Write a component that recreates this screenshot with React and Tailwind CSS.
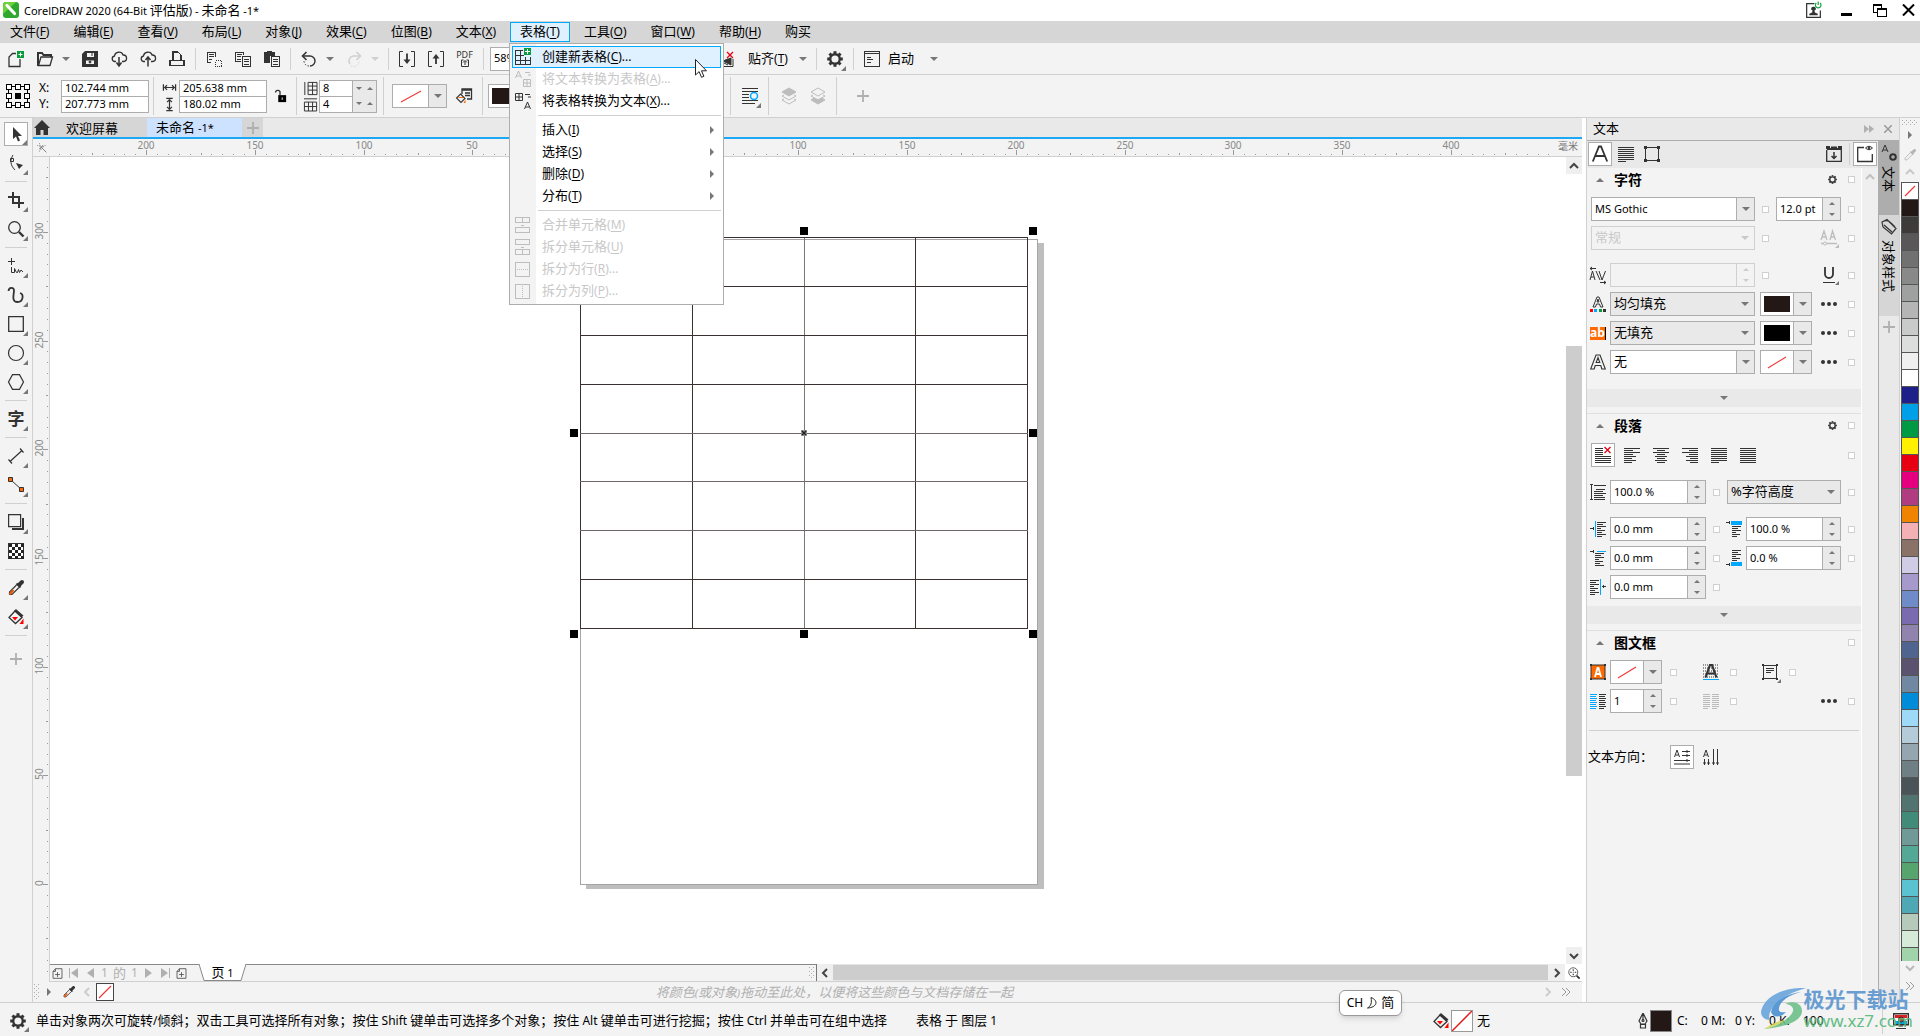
import { Fragment } from 'react';

const SWATCHES = [
  '#231815', '#3e3a39', '#595757', '#727171', '#898989', '#9fa0a0', '#b5b5b6', '#c9caca', '#dcdddd',
  '#efefef', '#ffffff', '#1d2088', '#00a0e9', '#009944', '#fff100', '#e60012', '#e4007f', '#b03c82',
  '#f08300', '#f4b1b3', '#8a7366', '#d0cce6', '#a699cb', '#6f8cc8', '#7a6aaf', '#9084ae', '#4f6590',
  '#5b5270', '#7188a3', '#008cd9', '#9ed9f8', '#b4cbd9', '#94a7b0', '#6f7f86', '#4a5358', '#517470',
  '#418b79', '#6f9a97', '#54a896', '#57a56d', '#5bc2d0', '#4ea9b4', '#b6cabb', '#d5ead7', '#a2d4a9',
];

const PX_PER_5MM = 10.87;

// Latin runs are set smaller than the Chinese around them
function Mixed({ children, latin = 'text-[11px]' }) {
  return children.split(/([\x20-\x7e]+)/).map((part, i) =>
    i % 2 ? (
      <span key={i} className={`${latin} whitespace-pre`}>{part}</span>
    ) : (
      <Fragment key={i}>{part}</Fragment>
    )
  );
}

function Label({ text, hotkey, dots }) {
  return (
    <>
      {text}
      {hotkey && (
        <span className="text-xs">
          (<span className="underline underline-offset-2">{hotkey}</span>){dots && '...'}
        </span>
      )}
    </>
  );
}

/* ---------- icons ---------- */

function Icon({ size = 16, color = '#333', crisp, children }) {
  return (
    <svg
      width={size}
      height={size}
      viewBox="0 0 16 16"
      fill="none"
      stroke={color}
      strokeWidth="1"
      shapeRendering={crisp ? 'crispEdges' : 'auto'}
      className="shrink-0 overflow-visible"
      aria-hidden="true"
    >
      {children}
    </svg>
  );
}

function Caret({ up, color = '#777' }) {
  return (
    <svg width="8" height="4" viewBox="0 0 8 4" className="shrink-0" aria-hidden="true">
      <path d={up ? 'M0 4h8L4 0z' : 'M0 0h8L4 4z'} fill={color} />
    </svg>
  );
}

function SmallCaret({ up, color = '#777' }) {
  return (
    <svg width="6" height="3" viewBox="0 0 6 3" className="shrink-0" aria-hidden="true">
      <path d={up ? 'M0 3h6L3 0z' : 'M0 0h6L3 3z'} fill={color} />
    </svg>
  );
}

function Chevron({ dir = 'up', color = '#444', double }) {
  const d = {
    up: 'M1 7l4-4 4 4',
    down: 'M1 3l4 4 4-4',
    left: 'M7 1L3 5l4 4',
    right: 'M3 1l4 4-4 4',
  }[dir];
  return (
    <svg width="10" height="10" viewBox="0 0 10 10" fill="none" stroke={color} strokeWidth={double ? 1 : 2} className="shrink-0" aria-hidden="true">
      {double ? <path d="M1 1l4 4-4 4M5 1l4 4-4 4" /> : <path d={d} />}
    </svg>
  );
}

function Lines({ rows, color = '#333' }) {
  return rows.map(([x1, x2], i) => <path key={i} d={`M${x1} ${i * 2 + 1.5}H${x2}`} stroke={color} />);
}

function Gear({ size = 16 }) {
  const teeth = [0, 45, 90, 135, 180, 225, 270, 315];
  return (
    <Icon size={size}>
      <circle cx="8" cy="8" r="4.8" strokeWidth="2.4" />
      {teeth.map((a) => (
        <path key={a} d="M8 2.8V0.2" strokeWidth="3" transform={`rotate(${a} 8 8)`} />
      ))}
    </Icon>
  );
}

function Plus({ color = '#b0b0b0' }) {
  return (
    <Icon size={12} color={color}>
      <path d="M8 0v16M0 8h16" strokeWidth="2.4" />
    </Icon>
  );
}

function Dropper({ gray }) {
  const ink = gray ? '#b4b4b4' : '#333';
  return (
    <Icon color={ink}>
      <path d="M11 5l3-3" strokeWidth="4" strokeLinecap="round" />
      <path d="M8.500 3.500l4 4" strokeWidth="2" />
      <path d="M8.500 5L1.500 12v2.500H4L11 7.500" strokeWidth="1.100" fill="#f3f3f3" />
      {!gray && <path d="M5.500 10L1.500 14.500" stroke="#e8590c" strokeWidth="2.200" />}
    </Icon>
  );
}

function Bucket() {
  return (
    <Icon>
      <path d="M7 2l7 6.500-6.500 6L1 8.500z" strokeWidth="1.300" />
      <path d="M7 1l7.500 6.500" strokeWidth="2.800" />
      <path d="M4 8h6l-3 3.500z" fill="#f00" stroke="none" />
      <path d="M15.500 9.500v5.500h-4z" fill="#f00" stroke="none" />
    </Icon>
  );
}

function RedSlash({ w = 24, h = 14 }) {
  return (
    <svg width={w} height={h} viewBox={`0 0 ${w} ${h}`} className="shrink-0" aria-hidden="true">
      <path d={`M1 ${h - 1}L${w - 1} 1`} stroke="#f03a3a" strokeWidth="1.2" />
    </svg>
  );
}

const cloud = 'M5 10.500H3.500a2.800 2.800 0 0 1 0-5.500a4.500 4.500 0 0 1 8.600-1a3.200 3.200 0 0 1 .4 6.500H11';

const icons = {
  newDoc: (
    <Icon>
      <path d="M8 2.500H4.500L1 6v9.500h11V8" strokeWidth="1.300" />
      <path d="M9 0h7v7H9z" fill="#0a9c3c" stroke="none" />
      <path d="M12.500 1.500v4M10.500 3.500h4" stroke="#fff" />
    </Icon>
  ),
  open: (
    <Icon>
      <path d="M1 15V2h4l1.500 2H14v2" strokeWidth="2" />
      <path d="M1.500 14.500L4 6h11.500L13 14.500z" strokeWidth="1.300" fill="#f3f3f3" />
    </Icon>
  ),
  save: (
    <Icon>
      <path d="M3 0h13v16H0V3z" fill="#333" stroke="none" />
      <path d="M5 2h7v4H5zM4 9.500h8V13H4z" fill="#f3f3f3" stroke="none" />
      <path d="M10 2v3" />
      <circle cx="8" cy="11" r="1" fill="#333" />
    </Icon>
  ),
  cloudDown: (
    <Icon>
      <path d={cloud} strokeWidth="1.300" />
      <path d="M8 6v8M5.500 11.500L8 15l2.500-3.500" strokeWidth="1.500" />
    </Icon>
  ),
  cloudUp: (
    <Icon>
      <path d={cloud} strokeWidth="1.300" />
      <path d="M8 15.500V7M5.500 9L8 6l2.500 3" strokeWidth="1.500" />
    </Icon>
  ),
  print: (
    <Icon crisp>
      <path d="M1 9.500h14v5H1zM4 9.500V1h5l3 3v5.500" strokeWidth="1.300" />
    </Icon>
  ),
  cut: (
    <Icon crisp>
      <path d="M5 11.500H1.500V1h8v5M3 3.500h5M3 5.500h5M3 8h3" />
      <path d="M9.500 9.500h6v6h-6z" strokeDasharray="1 1" />
    </Icon>
  ),
  copy: (
    <Icon crisp>
      <path d="M6 10.500H.5V1h8v3M2 3.500h5M2 5.500h4M2 8h4M7.500 5.500h8v10h-8zM9 8h5M9 10.500h5M9 13h5" />
    </Icon>
  ),
  paste: (
    <Icon crisp>
      <path d="M0 1h3V0h5v1h3v4H6v7H0z" fill="#333" stroke="none" />
      <path d="M7.500 5.500h8v10h-8zM9 8h5M9 10.500h5M9 13h5" />
    </Icon>
  ),
  undo: (
    <Icon>
      <path d="M2 5h7a5 5 0 0 1 0 10" strokeWidth="1.400" />
      <path d="M5.500 1L1.500 5l4 4" strokeWidth="1.600" />
      <path d="M8 15a5 5 0 0 1-5-5" strokeDasharray="1.500 1.500" />
    </Icon>
  ),
  redo: (
    <Icon color="#d0d0d0">
      <path d="M14 5H8a5 5 0 0 0-4 8" strokeWidth="1.400" />
      <path d="M10.500 1l4 4-4 4" strokeWidth="1.600" />
      <path d="M5 14.500a5 5 0 0 0 8-4" strokeDasharray="1.500 1.500" />
    </Icon>
  ),
  importDoc: (
    <Icon>
      <path d="M4 .5H.5v15H4M12 .5h3.500v15H12" />
      <path d="M8 2.500v7" strokeWidth="1.800" />
      <path d="M4.500 8.500h7L8 13z" fill="#333" stroke="none" />
    </Icon>
  ),
  exportDoc: (
    <Icon>
      <path d="M4 .5H.5v15H4M12 .5h3.500v15H12" />
      <path d="M8 13V6" strokeWidth="1.800" />
      <path d="M4.500 7.500h7L8 3z" fill="#333" stroke="none" />
    </Icon>
  ),
  snapOff: (
    <Icon>
      <path d="M1 8v7.500h14V8M10 8l-6 3 6 3" />
      <path d="M5 10l8-3v7z" fill="#333" />
      <path d="M9 1l6 6M15 1L9 7" stroke="#e60012" strokeWidth="1.300" />
    </Icon>
  ),
  launch: (
    <Icon crisp>
      <path d="M.5.5h15v15H.5zM0 2.500h16" />
      <path d="M3 6h4M3 8.500h6M3 11h4" />
    </Icon>
  ),
  pick: (
    <Icon>
      <path d="M5 1v12l3-2.500 2 5 2-1-2-4.500h4z" fill="#333" stroke="none" />
    </Icon>
  ),
  shape: (
    <Icon>
      <path d="M5 0C2 5 2 10 7 15M2.500 3.500h3v3h-3z" fill="#f3f3f3" />
      <path d="M8 8l7 2-4 4z" fill="#333" stroke="none" />
    </Icon>
  ),
  crop: (
    <Icon crisp>
      <path d="M5 0v11h11M0 5h11v11" strokeWidth="2" />
    </Icon>
  ),
  zoom: (
    <Icon>
      <circle cx="6.500" cy="6.500" r="5.800" strokeWidth="1.300" />
      <path d="M11 11l4.500 4.500" strokeWidth="2.400" />
    </Icon>
  ),
  freehand: (
    <Icon>
      <path d="M3.500 0v7M0 3.500h7M3.500 9v5.500h3v-4l2 4h1l1-3 1 3 1.500-2.500 2 2" />
    </Icon>
  ),
  artistic: (
    <Icon>
      <path d="M.5 4C1 0 6 0 6 3.500S3 15 9.500 15c6 0 6.500-8 2.500-9" strokeWidth="1.800" />
    </Icon>
  ),
  rect: (
    <Icon>
      <path d="M.7.7h14.600v14.600H.7z" strokeWidth="1.300" />
    </Icon>
  ),
  ellipse: (
    <Icon>
      <circle cx="8" cy="8" r="7.500" strokeWidth="1.200" />
    </Icon>
  ),
  polygon: (
    <Icon>
      <path d="M4.500.7h7l4 7.300-4 7.300h-7L.5 8z" strokeWidth="1.200" />
    </Icon>
  ),
  dimension: (
    <Icon>
      <path d="M2 13.500L14 2.500M.5 11.500l3.500 4M12 .5l3.500 4" strokeWidth="1.200" />
    </Icon>
  ),
  connector: (
    <Icon>
      <path d="M3 3l11 10" />
      <path d="M.5.5h4v4h-4zM11.500 10.500h4v4h-4z" fill="#ff6a00" />
    </Icon>
  ),
  shadow: (
    <Icon>
      <path d="M4 15h11V4" strokeWidth="2" />
      <path d="M.6.6h12v12H.6z" fill="#f3f3f3" strokeWidth="1.200" />
    </Icon>
  ),
  checker: (
    <Icon crisp>
      <path d="M.5.5h15v15H.5z" fill="#fff" />
      {[0, 1, 2, 3, 4].map((r) =>
        [0, 1, 2, 3, 4].map((c) =>
          (r + c) % 2 ? null : (
            <rect key={`${r}${c}`} x={c * 3 + 1} y={r * 3 + 1} width="3" height="3" fill="#222" stroke="none" />
          )
        )
      )}
    </Icon>
  ),
};

/* ---------- small controls ---------- */

function ToolButton({ label, children, corner, className = 'w-[29px]' }) {
  return (
    <button type="button" aria-label={label} className={`relative flex h-6 shrink-0 items-center justify-center ${className}`}>
      {children}
      {corner && <Corner />}
    </button>
  );
}

function Corner() {
  return (
    <svg width="5" height="5" className="absolute right-[3px] bottom-0" aria-hidden="true">
      <path d="M5 0v5H0z" fill="#777" />
    </svg>
  );
}

function DropCaret({ color }) {
  return (
    <button type="button" aria-label="展开" className="flex h-6 w-4 shrink-0 items-center pl-[3px]">
      <Caret color={color} />
    </button>
  );
}

function Divider({ tall }) {
  return <span className={`mr-[3px] ml-1 w-px shrink-0 bg-[#d0d0d0] ${tall ? 'h-[38px]' : 'h-[22px]'}`} />;
}

function Spin({ label, value, className, disabled }) {
  return (
    <div className={`flex h-6 shrink-0 border ${disabled ? 'border-[#d0d0d0] bg-[#f3f3f3]' : 'border-[#adadad] bg-white'} ${className}`}>
      <input aria-label={label} defaultValue={value} disabled={disabled} className="min-w-0 flex-1 px-[3px] text-[11px] outline-none" />
      <span className={`flex w-[18px] flex-col items-center justify-between border-l py-1 ${disabled ? 'border-[#d0d0d0]' : 'border-[#adadad] bg-[#e9e9e9]'}`}>
        <SmallCaret up color={disabled ? '#ccc' : '#777'} />
        <SmallCaret color={disabled ? '#ccc' : '#777'} />
      </span>
    </div>
  );
}

function Select({ label, value, className, kind = 'edit', latin }) {
  const tone = {
    edit: 'border-[#adadad] bg-white text-black',
    list: 'border-[#adadad] bg-[#e9e9e9] text-black',
    off: 'border-[#d0d0d0] bg-[#f3f3f3] text-[#c8c8c8]',
  }[kind];
  return (
    <div className={`relative h-6 shrink-0 border ${tone} ${className}`}>
      <select
        aria-label={label}
        disabled={kind === 'off'}
        className={`block h-full w-full appearance-none pl-[3px] opacity-100 outline-none ${latin ? 'text-[11px]' : 'text-[13px]'}`}
      >
        <option>{value}</option>
      </select>
      <span
        className={`pointer-events-none absolute inset-y-0 right-0 flex w-[18px] items-center justify-center ${
          kind === 'edit' ? 'border-l border-[#adadad] bg-[#e9e9e9]' : ''
        }`}
      >
        <Caret color={kind === 'off' ? '#c8c8c8' : '#777'} />
      </span>
    </div>
  );
}

function ColorDrop({ label, color }) {
  return (
    <button type="button" aria-label={label} className="flex h-6 w-[52px] shrink-0 border border-[#adadad] bg-white">
      <span className="flex h-full flex-1 items-center justify-center">
        {color ? <span className="h-4 w-[26px]" style={{ backgroundColor: color }} /> : <RedSlash w={20} h={13} />}
      </span>
      <span className="flex h-full w-[18px] items-center justify-center border-l border-[#adadad] bg-[#e9e9e9]">
        <Caret />
      </span>
    </button>
  );
}

function Lock({ className = '' }) {
  return <input type="checkbox" aria-label="锁定" className={`size-[7px] shrink-0 appearance-none border border-[#d0d0d0] bg-white ${className}`} />;
}

function Dots() {
  return (
    <button type="button" aria-label="更多" className="flex w-4 shrink-0 justify-between">
      <span className="size-1 rounded-full bg-[#333]" />
      <span className="size-1 rounded-full bg-[#333]" />
      <span className="size-1 rounded-full bg-[#333]" />
    </button>
  );
}

function Grip({ className = 'w-[16px] h-[6px]' }) {
  return (
    <svg className={className} aria-hidden="true">
      <defs>
        <pattern id="grip" width="4" height="4" patternUnits="userSpaceOnUse">
          <path d="M0 0h1v1H0zM2 2h1v1H2z" fill="#aaa" />
        </pattern>
      </defs>
      <rect width="100%" height="100%" fill="url(#grip)" />
    </svg>
  );
}

/* ---------- top bars ---------- */

function TitleBar() {
  return (
    <header className="flex h-[21px] shrink-0 items-center bg-white pr-[5px] pb-px pl-[3px]">
      <svg width="16" height="16" viewBox="0 0 16 16" aria-hidden="true">
        <rect width="16" height="16" rx="3" fill="#2fa82f" />
        <path d="M0 3a3 3 0 0 1 3-3h10L0 12z" fill="#6cd23c" />
        <path d="M4 3.500l7.500 8" stroke="#fff" strokeWidth="3.200" strokeLinecap="round" />
      </svg>
      <h1 className="ml-[5px] text-[13px] leading-4">
        <Mixed>CorelDRAW 2020 (64-Bit 评估版) - 未命名 -1*</Mixed>
      </h1>
      <button type="button" aria-label="帐户" className="ml-auto">
        <Icon size={15}>
          <path d="M9 .7H.7v14.600h14.600V8" strokeWidth="1.300" />
          <path d="M8 4a2 2 0 0 1 1 4l.5 2 3 1.500V13h-9v-1.500l3-1.500.5-2a2 2 0 0 1 1-4z" fill="#333" stroke="none" />
          <path d="M11 0a3 3 0 1 0 4 0M13-1.500V2" stroke="#1aa84a" strokeWidth="1.300" />
        </Icon>
      </button>
      <button type="button" aria-label="最小化" className="mt-2 ml-5 h-[3px] w-[11px] bg-black" />
      <button type="button" aria-label="还原" className="ml-[21px]">
        <svg width="14" height="13" viewBox="0 0 14 13" fill="none" stroke="#000" strokeWidth="1" shapeRendering="crispEdges" aria-hidden="true">
          <path d="M4 8.500H.5v-8h8V4M0 1.500h9M4.500 4.500h9v8h-9zM4 5.500h10" />
        </svg>
      </button>
      <button type="button" aria-label="关闭" className="ml-[15px]">
        <svg width="13" height="12" viewBox="0 0 13 12" stroke="#000" strokeWidth="2" aria-hidden="true">
          <path d="M1 .5l11 11M12 .5l-11 11" />
        </svg>
      </button>
    </header>
  );
}

const MENUS = [
  ['文件', 'F'], ['编辑', 'E'], ['查看', 'V'], ['布局', 'L'], ['对象', 'J'], ['效果', 'C'], ['位图', 'B'], ['文本', 'X'],
  ['表格', 'T'], ['工具', 'O'], ['窗口', 'W'], ['帮助', 'H'], ['购买'],
];

function MenuBar() {
  return (
    <nav className="flex h-[22px] shrink-0 items-center gap-1 bg-[#d6d6d6] text-[13px]">
      {MENUS.map(([text, hotkey]) => {
        const active = text === '表格';
        return (
          <div key={text} className="relative">
            <button
              type="button"
              className={`block h-5 border px-[9px] pb-[2px] leading-4 whitespace-nowrap ${
                active ? 'border-[#00a8ff] bg-[#dff0ff]' : 'border-transparent'
              }`}
            >
              <Label text={text} hotkey={hotkey} />
            </button>
            {active && <TableMenu />}
          </div>
        );
      })}
    </nav>
  );
}

const gray = '#bdbdbd';

const TABLE_MENU = [
  {
    text: '创建新表格', hotkey: 'C', dots: true, active: true,
    icon: (
      <Icon crisp>
        <path d="M8 1.500H.5v14h15V8M0 6.500h9M0 11.500h15M5.500 1v14M10.500 8v7" />
        <path d="M9-1h7v7H9z" fill="#0a9c3c" stroke="none" />
        <path d="M12.500 0v5M10 2.500h5" stroke="#fff" />
      </Icon>
    ),
  },
  {
    text: '将文本转换为表格', hotkey: 'A', dots: true, off: true,
    icon: (
      <Icon color={gray}>
        <path d="M.5 7l3-7h0l3 7M1.500 5h4M10 1.500h5M13 4h3M8.500 8.500h7v7h-7zM8 12h8M12 8v8" />
      </Icon>
    ),
  },
  {
    text: '将表格转换为文本', hotkey: 'X', dots: true,
    icon: (
      <Icon>
        <path d="M.5.500h7v7h-7zM0 4h8M4 0v8M10 1.500h5M13 4h3M9.500 16l3-7h0l3 7M10.500 14h4" />
      </Icon>
    ),
  },
  null,
  { text: '插入', hotkey: 'I', sub: true },
  { text: '选择', hotkey: 'S', sub: true },
  { text: '删除', hotkey: 'D', sub: true },
  { text: '分布', hotkey: 'T', sub: true },
  null,
  {
    text: '合并单元格', hotkey: 'M', off: true,
    icon: <Icon color={gray} crisp><path d="M.5.500h14v5H.5zM7.500 0v5M.5 10.500h14v5H.5zM6 8h3" /></Icon>,
  },
  {
    text: '拆分单元格', hotkey: 'U', off: true,
    icon: <Icon color={gray} crisp><path d="M.5.500h14v5H.5zM7.500 10v5M.5 10.500h14v5H.5zM6 8h3" /></Icon>,
  },
  {
    text: '拆分为行', hotkey: 'R', dots: true, off: true,
    icon: <Icon color={gray} crisp><path d="M.5 1.500h14v14H.5z" /><path d="M2 8.500h12" strokeDasharray="1 1" /></Icon>,
  },
  {
    text: '拆分为列', hotkey: 'P', dots: true, off: true,
    icon: <Icon color={gray} crisp><path d="M.5 1.500h14v14H.5z" /><path d="M7.500 3v11" strokeDasharray="1 1" /></Icon>,
  },
];

function TableMenu() {
  return (
    <ul className="absolute top-[21px] left-[-1px] z-20 w-[215px] border border-[#adadad] bg-[linear-gradient(to_right,#f3f3f3_26px,#fff_26px)] py-[2px]">
      {TABLE_MENU.map((item, i) =>
        item === null ? (
          <li key={i} className="flex h-[7px] items-center pr-[2px] pl-7">
            <span className="h-px w-full bg-[#d0d0d0]" />
          </li>
        ) : (
          <li key={i} className="px-[2px]">
            <button
              type="button"
              disabled={item.off}
              className={`flex h-[22px] w-full items-center border pr-1.5 pl-[2px] whitespace-nowrap ${
                item.active ? 'border-[#00a8ff] bg-[#dff0ff]' : 'border-transparent'
              } ${item.off ? 'text-[#c8c8c8]' : 'text-black'}`}
            >
              <span className="mr-[11px] w-4">{item.icon}</span>
              <span>
                <Label {...item} />
              </span>
              {item.sub && (
                <svg width="4" height="8" className="ml-auto" aria-hidden="true">
                  <path d="M0 0v8l4-4z" fill="#777" />
                </svg>
              )}
            </button>
          </li>
        )
      )}
    </ul>
  );
}

function StandardBar() {
  return (
    <div className="flex h-8 shrink-0 items-center border-b border-[#d0d0d0] pl-px text-[13px]">
      <ToolButton label="新建">{icons.newDoc}</ToolButton>
      <ToolButton label="打开">{icons.open}</ToolButton>
      <DropCaret />
      <ToolButton label="保存">{icons.save}</ToolButton>
      <ToolButton label="从云下载">{icons.cloudDown}</ToolButton>
      <ToolButton label="上传到云">{icons.cloudUp}</ToolButton>
      <ToolButton label="打印">{icons.print}</ToolButton>
      <Divider />
      <ToolButton label="剪切">{icons.cut}</ToolButton>
      <ToolButton label="复制">{icons.copy}</ToolButton>
      <ToolButton label="粘贴">{icons.paste}</ToolButton>
      <Divider />
      <ToolButton label="撤消">{icons.undo}</ToolButton>
      <DropCaret />
      <ToolButton label="重做">{icons.redo}</ToolButton>
      <DropCaret color="#d0d0d0" />
      <Divider />
      <ToolButton label="导入">{icons.importDoc}</ToolButton>
      <ToolButton label="导出">{icons.exportDoc}</ToolButton>
      <ToolButton label="发布为 PDF" className="w-[29px] flex-col">
        <span className="text-[9px] leading-[8px] text-[#333]">PDF</span>
        <Icon size={8}>
          <path d="M5 2H1v13h14V2h-4M8 12V4M4 7l4-4 4 4" strokeWidth="2" />
        </Icon>
      </ToolButton>
      <Divider />
      <Select label="缩放级别" value="58%" latin className="ml-[3px] w-[76px]" />
      <ToolButton label="全屏预览">{icons.rect}</ToolButton>
      <ToolButton label="标尺">{icons.dimension}</ToolButton>
      <ToolButton label="网格">{icons.checker}</ToolButton>
      <ToolButton label="辅助线">{icons.crop}</ToolButton>
      <ToolButton label="放大">{icons.zoom}</ToolButton>
      <ToolButton label="关闭贴齐">{icons.snapOff}</ToolButton>
      <button type="button" className="w-14 shrink-0 pl-2 text-left whitespace-nowrap">
        <Label text="贴齐" hotkey="T" />
      </button>
      <DropCaret />
      <Divider />
      <ToolButton label="选项" corner><Gear /></ToolButton>
      <Divider />
      <ToolButton label="启动应用">{icons.launch}</ToolButton>
      <button type="button" className="w-[41px] shrink-0 pl-0.5 text-left">启动</button>
      <DropCaret />
    </div>
  );
}

function StackedInputs({ labels, values }) {
  return (
    <div className="w-[88px] shrink-0 border border-[#adadad] bg-white">
      {values.map((v, i) => (
        <input
          key={v}
          aria-label={labels[i]}
          defaultValue={v}
          className={`block w-full px-[3px] text-[11px] outline-none ${i ? 'h-4 border-t border-[#adadad]' : 'h-[15px]'}`}
        />
      ))}
    </div>
  );
}

function PropertyBar() {
  return (
    <div className="flex h-[43px] shrink-0 items-center border-b border-[#d0d0d0] pl-1.5">
      <svg width="24" height="24" viewBox="0 0 24 24" fill="#fff" stroke="#000" className="shrink-0" aria-hidden="true">
        <path d="M2.500 2.500h19v19h-19z" fill="none" />
        {[0, 9, 18].map((y) =>
          [0, 9, 18].map((x) => (
            <rect key={`${x}-${y}`} x={x + 0.5} y={y + 0.5} width="5" height="5" fill={x === 9 && y === 9 ? '#000' : '#fff'} />
          ))
        )}
      </svg>
      <div className="ml-[9px] w-[22px] shrink-0 text-xs leading-4">
        <p>X:</p>
        <p>Y:</p>
      </div>
      <StackedInputs labels={['X 坐标', 'Y 坐标']} values={['102.744 mm', '207.773 mm']} />
      <Divider tall />
      <div className="ml-1.5 flex w-4 shrink-0 flex-col gap-1">
        <Icon size={13}><path d="M.5 4v8M15.500 4v8M2 8h12M5 5L2 8l3 3M11 5l3 3-3 3" strokeWidth="1.500" /></Icon>
        <Icon size={13}><path d="M4 .5h8M4 15.500h8M8 2v12M5 5l3-3 3 3M5 11l3 3 3-3" strokeWidth="1.500" /></Icon>
      </div>
      <StackedInputs labels={['宽度', '高度']} values={['205.638 mm', '180.02 mm']} />
      <ToolButton label="锁定比率" className="w-[25px]">
        <Icon size={14}>
          <path d="M5 8V4a3 3 0 0 0-5 0v1" transform="translate(3 -1)" strokeWidth="1.500" />
          <path d="M6 7h9v8H6z" fill="#000" stroke="none" />
          <path d="M10.500 9.500v3" stroke="#fff" />
        </Icon>
      </ToolButton>
      <Divider tall />
      <div className="ml-1 flex w-[15px] shrink-0 flex-col gap-[3px]">
        <Icon size={13}><path d="M1 0v16M5 .5h11v15H5zM5 5h11M5 10h11M10.500 0v16" strokeWidth="1.200" /></Icon>
        <Icon size={13}><path d="M0 1h16M.5 5h15v11H.5zM0 10.500h16M5.500 5v11M10.500 5v11" strokeWidth="1.200" /></Icon>
      </div>
      <div className="flex w-[58px] shrink-0 border border-[#adadad] bg-white">
        <div className="w-8">
          <input aria-label="行数" defaultValue="8" className="block h-[15px] w-full px-[3px] text-[11px] outline-none" />
          <input aria-label="列数" defaultValue="4" className="block h-4 w-full border-t border-[#adadad] px-[3px] text-[11px] outline-none" />
        </div>
        <div className="flex flex-1 flex-col justify-around border-l border-[#adadad] bg-[#e9e9e9]">
          <span className="flex items-center justify-around"><SmallCaret /><SmallCaret up /></span>
          <span className="flex items-center justify-around"><SmallCaret /><SmallCaret up /></span>
        </div>
      </div>
      <span className="ml-[6px] h-[38px] w-px shrink-0 bg-[#d0d0d0]" />
      <button type="button" aria-label="背景色" className="ml-2 flex h-6 w-[55px] shrink-0 border border-[#adadad] bg-white">
        <span className="flex h-full flex-1 items-center justify-center"><RedSlash w={22} h={13} /></span>
        <span className="flex h-full w-[18px] items-center justify-center border-l border-[#adadad] bg-[#e9e9e9]"><Caret /></span>
      </button>
      <ToolButton label="编辑填充" className="ml-0.5 w-[29px]">
        <Icon>
          <path d="M6 6V1h9.500v10H11M6 2h10M9 5h5M9 7.500h5" strokeWidth="1.300" />
          <path d="M4.500 6L9 10.500l-4 4L.5 10z" fill="#f3f3f3" strokeWidth="1.100" />
          <path d="M2.500 9.500h4.500" stroke="#ff6a00" />
          <path d="M9.500 11.500v3.500h-2z" fill="#ff6a00" stroke="none" />
        </Icon>
      </ToolButton>
      <Divider tall />
      <button type="button" aria-label="轮廓色" className="ml-0.5 flex h-6 w-[60px] shrink-0 items-center border border-[#adadad] bg-white pl-[3px]">
        <span className="h-4 w-[26px] bg-[#231815]" />
      </button>
      <span className="ml-[182px] h-[38px] w-px shrink-0 bg-[#d0d0d0]" />
      <ToolButton label="文本换行" corner className="ml-1 w-[29px]">
        <Icon crisp>
          <path d="M0 .5h16M0 3.500h16M0 6.500h7M0 9.500h7M0 12.500h16M0 15.500h13" />
          <circle cx="12" cy="8" r="3.500" stroke="#00a8ff" strokeWidth="1.500" fill="#f3f3f3" shapeRendering="auto" />
        </Icon>
      </ToolButton>
      <Divider tall />
      <ToolButton label="到图层前面" className="ml-0.5 w-[29px]">
        <Icon color={gray}>
          <path d="M8 0l7 4-7 4-7-4z" fill={gray} />
          <path d="M3 7l-2 1 7 4 7-4-2-1M3 11l-2 1 7 4 7-4-2-1" />
        </Icon>
      </ToolButton>
      <ToolButton label="到图层后面">
        <Icon color={gray}>
          <path d="M8 0l7 4-7 4-7-4z" />
          <path d="M3 7l-2 1 7 4 7-4-2-1" />
          <path d="M1 12l3-2 4 2 4-2 3 2-7 4z" fill={gray} />
        </Icon>
      </ToolButton>
      <Divider tall />
      <ToolButton label="添加" className="ml-2 w-[29px]"><Plus /></ToolButton>
    </div>
  );
}

/* ---------- toolbox ---------- */

const TOOLS = [
  'pick', 'shape', null, 'crop', 'zoom', null, 'freehand', 'artistic', 'rect', 'ellipse', 'polygon', null, 'text', null,
  'dimension', 'connector', null, 'shadow', 'checker', null, 'dropper', 'bucket', null,
];

function Toolbox() {
  return (
    <aside className="flex w-[33px] shrink-0 flex-col items-center border-r border-[#d0d0d0] pt-px">
      {TOOLS.map((name, i) =>
        name === null ? (
          <span key={i} className="my-[3px] h-[2px] w-[22px] border-b border-[#d0d0d0]" />
        ) : (
          <button key={i} type="button" aria-label={name} className="flex h-[29px] items-center">
            <span className={`relative flex size-6 items-center justify-center ${name === 'pick' ? 'border border-[#adadad] bg-white' : ''}`}>
              {name === 'text' && <span className="text-[17px] leading-4 font-bold text-[#333]">字</span>}
              {name === 'dropper' && <Dropper />}
              {name === 'bucket' && <Bucket />}
              {icons[name]}
              {name !== 'checker' && (
                <svg width="5" height="5" className="absolute right-0 bottom-0" aria-hidden="true">
                  <path d="M5 0v5H0z" fill="#777" />
                </svg>
              )}
            </span>
          </button>
        )
      )}
      <button type="button" aria-label="添加工具" className="mt-3.5"><Plus /></button>
    </aside>
  );
}

/* ---------- document ---------- */

function tickSize(i) {
  if (i % 10 === 0) return 5;
  return i % 5 === 0 ? 2 : 1;
}

function TopRuler() {
  const ticks = Array.from({ length: 185 }, (_, i) => i - 48);
  return (
    <svg className="h-[17px] min-w-0 flex-1" aria-hidden="true" fontSize="10" fill="#888">
      {ticks.map((i) => {
        const x = Math.round(531 + i * PX_PER_5MM);
        return (
          <g key={i}>
            <rect x={x} y={16 - tickSize(i)} width="1" height={tickSize(i)} fill="#999" />
            {i % 10 === 0 && i < 90 && (
              <text x={x} y="10" textAnchor="middle">{Math.abs(i * 5)}</text>
            )}
          </g>
        );
      })}
    </svg>
  );
}

function LeftRuler() {
  const ticks = Array.from({ length: 76 }, (_, i) => i - 8);
  return (
    <svg className="w-[17px] shrink-0 self-stretch border-r border-[#d0d0d0]" aria-hidden="true" fontSize="10" fill="#888">
      {ticks.map((i) => {
        const y = Math.round(727 - i * PX_PER_5MM);
        return (
          <g key={i}>
            <rect x={15 - tickSize(i)} y={y} width={tickSize(i)} height="1" fill="#999" />
            {i % 10 === 0 && (
              <text x="10" y={y - 1} textAnchor="middle" transform={`rotate(-90 10 ${y - 1})`}>{Math.abs(i * 5)}</text>
            )}
          </g>
        );
      })}
    </svg>
  );
}

function Drawing() {
  const cols = [530, 642, 754, 865, 977];
  const rows = [80, 129, 178, 227, 276, 324, 373, 422, 471];
  const handles = [[520, 70], [750, 70], [979, 70], [520, 272], [979, 272], [520, 473], [750, 473], [979, 473]];
  return (
    <svg className="absolute inset-0 h-full w-full" aria-label="未命名 -1" shapeRendering="crispEdges">
      <rect x="536" y="86" width="458" height="646" fill="#bebebe" />
      <rect x="530.5" y="82.500" width="457" height="645" fill="#fff" stroke="#a5a5a5" />
      {cols.map((x) => (
        <path key={x} d={`M${x + 0.5} 80v392`} stroke={x === 754 ? '#7c7676' : '#3a3030'} />
      ))}
      {rows.map((y) => (
        <path key={y} d={`M530 ${y + 0.5}h448`} stroke={y > 270 && y < 400 ? '#6c6666' : '#3a3030'} />
      ))}
      <rect x="751" y="273" width="6" height="6" fill="#999" />
      <path d="M752 274l4 4M756 274l-4 4" stroke="#222" strokeWidth="1.500" shapeRendering="auto" />
      {handles.map(([x, y]) => (
        <rect key={`${x}-${y}`} x={x} y={y} width="8" height="8" />
      ))}
    </svg>
  );
}

function PageArrow({ left, bar }) {
  return (
    <svg width="10" height="10" viewBox="0 0 10 10" fill="#b0b0b0" className={left ? 'shrink-0' : 'shrink-0 -scale-x-100'} aria-hidden="true">
      <path d="M9 0v10L2 5z" />
      {bar && <path d="M0 0h1v10H0z" />}
    </svg>
  );
}

function AddPage() {
  return (
    <Icon size={11} color="#555">
      <path d="M5 1h9.500v14h-13V5zM5 1v4H1.500M8 6v7M4.500 9.500h7" strokeWidth="1.300" />
    </Icon>
  );
}

function Document() {
  return (
    <main className="flex min-w-0 flex-1 flex-col">
      <div className="flex h-[21px] shrink-0 border-b-2 border-[#1ca8f5] bg-[#e9e9e9] text-[13px] leading-[18px]">
        <button type="button" aria-label="主页" className="flex w-[17px] items-center justify-center bg-[#d6d6d6]">
          <svg width="16" height="15" viewBox="0 0 16 15" fill="#333" aria-hidden="true">
            <path d="M8 0l8 8h-2v7H9.500v-5h-3v5H2V8H0z" />
          </svg>
        </button>
        <button type="button" className="w-[97px] bg-[#d6d6d6] pl-4 text-left">欢迎屏幕</button>
        <button type="button" className="w-[95px] bg-[#cde2ff] pl-[9px] text-left">
          <Mixed>未命名 -1*</Mixed>
        </button>
        <button type="button" aria-label="新建文档" className="flex w-[21px] items-center justify-center bg-[#d6d6d6]"><Plus /></button>
      </div>
      <div className="flex h-[18px] shrink-0 border-b border-[#d0d0d0]">
        <span className="flex w-[17px] items-center justify-center">
          <Icon size={10} color="#777">
            <path d="M4 0v16M0 4h16" strokeDasharray="2 2" />
            <path d="M15 15L6 6M6 11V6h5" strokeWidth="1.500" />
          </Icon>
        </span>
        <TopRuler />
        <span className="w-[24px] text-[10px] leading-[14px] text-[#777]">毫米</span>
      </div>
      <div className="flex min-h-0 flex-1">
        <LeftRuler />
        <div className="flex min-w-0 flex-1 flex-col">
          <div className="flex min-h-0 flex-1">
            <div className="relative min-w-0 flex-1 overflow-hidden bg-white">
              <Drawing />
            </div>
            <div className="flex w-4 shrink-0 flex-col bg-white">
              <button type="button" aria-label="向上滚动" className="flex h-[17px] items-center justify-center bg-[#efefef]"><Chevron dir="up" /></button>
              <span className="flex-[172]" />
              <span className="flex-[430] bg-[#cdcdcd]" />
              <span className="flex-[171]" />
              <button type="button" aria-label="向下滚动" className="flex h-[17px] items-center justify-center bg-[#efefef]"><Chevron dir="down" /></button>
            </div>
          </div>
          <div className="flex h-[18px] shrink-0 border-b border-[#d0d0d0] text-[#b0b0b0]">
            <div className="flex w-[767px] shrink-0 items-center border-r border-[#777]">
              <div className="flex h-full w-[149px] items-center gap-[6px] border-t border-[#888] pl-[2px]">
                <AddPage />
                <PageArrow left bar />
                <PageArrow left />
                <span className="flex w-[37px] shrink-0 items-center justify-between text-[13px] leading-4">
                  <span className="text-xs">1</span>
                  <span>的</span>
                  <span className="text-xs">1</span>
                </span>
                <PageArrow />
                <PageArrow bar />
                <AddPage />
              </div>
              <button type="button" className="relative h-full w-[47px] text-[13px] leading-4 text-black">
                <svg width="47" height="17" className="absolute inset-0" aria-hidden="true">
                  <path d="M0 0l5 16.500h37L47 0" fill="#fff" stroke="#888" />
                </svg>
                <span className="relative"><Mixed>页 1</Mixed></span>
              </button>
              <span className="flex h-full flex-1 items-center justify-end border-t border-[#888] pr-px"><Grip className="h-3 w-[6px]" /></span>
            </div>
            <button type="button" aria-label="向左滚动" className="flex w-4 items-center justify-center bg-[#efefef]"><Chevron dir="left" /></button>
            <span className="flex-1 border-y border-[#e6e6e6] bg-[#cdcdcd]" />
            <button type="button" aria-label="向右滚动" className="flex w-[17px] items-center justify-center bg-[#efefef]"><Chevron dir="right" /></button>
            <button type="button" aria-label="导航器" className="flex w-[17px] items-center justify-center bg-white">
              <Icon size={12}>
                <circle cx="7" cy="7" r="6" />
                <path d="M11.500 11.500l4 4" strokeWidth="2.400" />
                <path d="M7 3v2M7 9v2M3 7h2M9 7h2M6.500 7h1" strokeWidth="1.500" />
              </Icon>
            </button>
          </div>
        </div>
      </div>
      <div className="flex h-5 shrink-0 items-center">
        <Grip className="ml-px h-4 w-[6px]" />
        <svg width="4" height="8" className="ml-[7px]" aria-hidden="true"><path d="M0 0v8l4-4z" fill="#777" /></svg>
        <button type="button" aria-label="滴管" className="ml-2.5 flex w-4 justify-center">
          <span className="flex scale-75"><Dropper /></span>
        </button>
        <span className="ml-0.5 flex w-4 justify-center"><Chevron dir="left" color="#ccc" /></span>
        <button type="button" aria-label="无色" className="ml-px flex size-[18px] items-center justify-center border border-[#444] bg-white">
          <RedSlash w={14} h={14} />
        </button>
        <p className="flex-1 pl-3 text-center text-[13px] leading-4 text-[#b0b0b0] italic">
          <Mixed>将颜色(或对象)拖动至此处，以便将这些颜色与文档存储在一起</Mixed>
        </p>
        <span className="flex w-[39px] gap-2"><Chevron dir="right" color="#ccc" /><Chevron double color="#999" /></span>
      </div>
    </main>
  );
}

/* ---------- text docker ---------- */

function SectionHead({ title, gear }) {
  return (
    <div className="flex h-6 items-center pr-1.5 pb-px pl-[9px]">
      <Caret up />
      <h2 className="ml-2.5 text-sm font-bold">{title}</h2>
      <span className="mr-[11px] ml-auto">{gear && <Gear size={9} />}</span>
      <Lock />
    </div>
  );
}

function MoreStrip() {
  return (
    <>
      <button type="button" aria-label="展开更多" className="flex h-[18px] w-full items-center justify-center bg-[#e9e9e9]"><Caret /></button>
      <span className="mt-1.5 block h-px bg-[#e0e0e0]" />
    </>
  );
}

function Row({ children, icon }) {
  return (
    <div className="flex h-6 items-center pr-1.5 pl-[3px]">
      {icon && <span className="mr-1 flex w-4 shrink-0">{icon}</span>}
      {children}
    </div>
  );
}

const left = [[0, 16], [0, 9], [0, 16], [0, 9], [0, 12], [0, 8], [0, 12], [0, 8]];
const center = [[0, 16], [4, 12], [0, 16], [4, 12], [2, 14], [4, 12], [2, 14], [4, 12]];
const right = [[0, 16], [7, 16], [0, 16], [7, 16], [4, 16], [8, 16], [4, 16], [8, 16]];
const full = [[0, 16], [0, 16], [0, 16], [0, 16], [0, 16], [0, 16], [0, 16], [0, 8]];
const force = [[0, 16], [0, 16], [0, 16], [0, 16], [0, 16], [0, 16], [0, 16], [0, 16]];
const indent = [[7, 16], [7, 13], [7, 16], [7, 11], [7, 15], [7, 12], [7, 16], [7, 12]];

function OutlineA({ y = 0 }) {
  return <path d={`M.7 ${15 + y}L6 ${1 + y}h4l5.300 14h-3.500l-1-3.500H5.200l-1 3.500zM6.200 ${8.5 + y}h3.600L8 ${3.5 + y}z`} strokeWidth="1.100" />;
}

function CharacterSection() {
  return (
    <section className="pb-[15px]">
      <SectionHead title="字符" gear />
      <div className="mt-[5px] flex flex-col gap-[5px]">
        <div className="flex items-center pr-1.5 pl-1">
          <Select label="字体" value="MS Gothic" latin className="w-[164px]" />
          <Lock className="ml-[7px]" />
          <Spin label="字号" value="12.0 pt" className="ml-[7px] w-[65px]" />
          <Lock className="ml-[7px]" />
        </div>
        <div className="flex items-center pr-1.5 pl-1">
          <Select label="字形" value="常规" kind="off" className="w-[164px]" />
          <Lock className="ml-[7px]" />
          <span className="relative mr-[9px] ml-auto flex w-[18px]">
            <Icon color={gray}>
              <path d="M0 10L3 1l3 9M1 7h4M9 10l2.500-9 3 9M10 7h4" strokeWidth="1.300" />
              <path d="M0 13.500h16" strokeWidth="1.500" />
              <circle cx="4" cy="13.500" r="1.500" fill="#f3f3f3" />
            </Icon>
            <svg width="4" height="4" className="absolute right-0 bottom-[-2px]" aria-hidden="true"><path d="M4 0v4H0z" fill="#bbb" /></svg>
          </span>
          <Lock />
        </div>
      </div>
      <div className="mt-[13px] flex flex-col gap-[5px]">
        <Row icon={<Icon><path d="M0 13l2.500-9L5 13M1 10h3M6 4l4 9M9 4l3 9 3.500-9M0 1.500h6M2 0L0 1.500 2 3M10 15.500h6M14 14l2 1.500-2 1.500" /></Icon>}>
          <Spin label="字距" disabled className="w-[145px]" />
          <Lock className="ml-[7px]" />
          <button type="button" aria-label="下划线" className="relative mr-[9px] ml-auto flex w-[18px]">
            <Icon><path d="M4 0v7a4 4 0 0 0 8 0V0" strokeWidth="1.800" /><path d="M2 15.500h12" /></Icon>
            <svg width="4" height="4" className="absolute right-0 bottom-[-2px]" aria-hidden="true"><path d="M4 0v4H0z" fill="#777" /></svg>
          </button>
          <Lock />
        </Row>
        <Row
          icon={
            <Icon>
              <path d="M3 11L7 1h2l4 10h-2.500l-1-3h-3l-1 3zM7 6h2L8 3z" />
              <path d="M0 13h3v3H0z" fill="#f00" stroke="none" />
              <path d="M4 13h3v3H4z" fill="#00a8ff" stroke="none" />
              <path d="M9 13h3v3H9z" fill="#0a9c3c" stroke="none" />
              <path d="M13 13h3v3h-3z" fill="#333" stroke="none" />
            </Icon>
          }
        >
          <Select label="填充类型" value="均匀填充" kind="list" className="mr-[5px] w-[145px]" />
          <ColorDrop label="文本颜色" color="#231815" />
          <span className="mr-[11px] ml-auto flex"><Dots /></span>
          <Lock />
        </Row>
        <Row
          icon={
            <span className="flex h-[13px] w-4 items-center justify-center border-r border-black bg-[#ff6a00] text-[12px] leading-3 font-bold text-white">ab</span>
          }
        >
          <Select label="背景填充类型" value="无填充" kind="list" className="mr-[5px] w-[145px]" />
          <ColorDrop label="文本背景色" color="#000000" />
          <span className="mr-[11px] ml-auto flex"><Dots /></span>
          <Lock />
        </Row>
        <Row icon={<Icon><OutlineA /></Icon>}>
          <Select label="轮廓宽度" value="无" className="mr-[5px] w-[145px]" />
          <ColorDrop label="轮廓颜色" />
          <span className="mr-[11px] ml-auto flex"><Dots /></span>
          <Lock />
        </Row>
      </div>
    </section>
  );
}

function ParagraphSection() {
  return (
    <section className="pb-[7px]">
      <SectionHead title="段落" gear />
      <div className="mt-[5px] flex h-6 items-center pr-1.5 pl-1">
        <div className="flex gap-[5px]">
          <button type="button" aria-label="无对齐" className="flex size-6 items-center justify-center border border-[#adadad] bg-white">
            <Icon crisp>
              <Lines rows={[[0, 8], [0, 8], [0, 8], [0, 8], [0, 16], [0, 16], [0, 16], [0, 16]]} />
              <path d="M9.500 0l6 6M15.500 0l-6 6" stroke="#e60012" strokeWidth="1.300" shapeRendering="auto" />
            </Icon>
          </button>
          {[['左', left], ['中', center], ['右', right], ['两端', full], ['强制', force]].map(([name, rows]) => (
            <button key={name} type="button" aria-label={name} className="flex size-6 items-center justify-center">
              <Icon crisp><Lines rows={rows} /></Icon>
            </button>
          ))}
        </div>
        <Lock className="ml-auto" />
      </div>
      <div className="mt-[13px]">
        <Row icon={<Icon crisp><path d="M1.500 1v14M0 .5h3M0 15.500h3" /><Lines rows={[[4, 16], [4, 4], [6, 15], [4, 13], [4, 16], [4, 13], [4, 15], [4, 15]]} /></Icon>}>
          <Spin label="行间距" value="100.0 %" className="w-24" />
          <Lock className="ml-[7px]" />
          <Select label="行距单位" value="%字符高度" kind="list" className="mr-[7px] ml-auto w-[114px]" />
          <Lock />
        </Row>
      </div>
      <div className="mt-[13px] flex flex-col gap-[5px]">
        <Row icon={<Icon crisp><path d="M0 7.500h4M3 6v3" /><path d="M5.500 0v16" stroke="#00a8ff" /><Lines rows={indent} /></Icon>}>
          <Spin label="左缩进" value="0.0 mm" className="w-24" />
          <Lock className="ml-[7px]" />
          <span className="mr-1 ml-auto flex">
            <Icon crisp>
              <path d="M0 1.500h4M3 0v3" />
              <path d="M5 0h11v4H5z" fill="#00a8ff" stroke="none" />
              <g transform="translate(-1 4)"><Lines rows={indent.slice(0, 6)} /></g>
            </Icon>
          </span>
          <Spin label="段前间距" value="100.0 %" className="mr-[7px] w-[95px]" />
          <Lock />
        </Row>
        <Row icon={<Icon crisp><path d="M0 1.500h4M3 0v3" /><path d="M7 1.500h9" stroke="#00a8ff" /><g transform="translate(-2 2)"><Lines rows={indent.slice(0, 7)} /></g></Icon>}>
          <Spin label="首行缩进" value="0.0 mm" className="w-24" />
          <Lock className="ml-[7px]" />
          <span className="mr-1 ml-auto flex">
            <Icon crisp>
              <path d="M0 14.500h4M3 13v3" />
              <path d="M5 12h11v4H5z" fill="#00a8ff" stroke="none" />
              <g transform="translate(-1 -1)"><Lines rows={indent.slice(0, 6)} /></g>
            </Icon>
          </span>
          <Spin label="段后间距" value="0.0 %" className="mr-[7px] w-[95px]" />
          <Lock />
        </Row>
        <Row icon={<Icon crisp><g transform="translate(-7 0)"><Lines rows={indent} /></g><path d="M10.500 0v16" stroke="#00a8ff" /><path d="M12 7.500h4M13 6v3" /></Icon>}>
          <Spin label="右缩进" value="0.0 mm" className="w-24" />
          <Lock className="ml-[7px]" />
        </Row>
      </div>
    </section>
  );
}

function FrameSection() {
  const corners = <path d="M0 0h2v2H0zM14 0h2v2h-2zM0 14h2v2H0zM14 14h2v2h-2z" fill="#333" stroke="none" />;
  return (
    <section>
      <SectionHead title="图文框" />
      <div className="mt-[5px] flex flex-col gap-[5px]">
        <Row
          icon={
            <Icon>
              <path d="M1 1h14v14H1z" fill="#ff6a00" />
              {corners}
              <path d="M5 13l2.500-9h1L11 13M6 10h4" stroke="#fff" strokeWidth="1.800" />
            </Icon>
          }
        >
          <ColorDrop label="背景颜色" />
          <Lock className="ml-2" />
          <span className="ml-[26px] flex">
            <Icon>
              <path d="M0 1h16M0 4h16M0 7h16M0 10h16M0 13h16" strokeDasharray="1 1" />
              <path d="M2.500 13.500L7 1h2l4.500 12.500M5 9.500h6" strokeWidth="2.200" />
              <path d="M0 15.500h16" stroke="#00a8ff" />
            </Icon>
          </span>
          <Lock className="ml-[11px]" />
          <span className="relative ml-[25px] flex">
            <Icon crisp>
              <path d="M1.500 1.500h13v13h-13zM4 4.500h8M4 6.500h8M4 8.500h5" />
              {corners}
            </Icon>
            <svg width="4" height="4" className="absolute right-[-3px] bottom-[-3px]" aria-hidden="true"><path d="M4 0v4H0z" fill="#777" /></svg>
          </span>
          <Lock className="ml-[11px]" />
        </Row>
        <Row
          icon={
            <Icon crisp>
              <Lines color="#00a8ff" rows={[[0, 7], [0, 6], [0, 7], [0, 6], [0, 7], [0, 6], [0, 7], [0, 6]]} />
              <Lines rows={[[9, 16], [9, 15], [9, 16], [9, 15], [9, 16], [9, 15], [9, 16], [9, 14]]} />
            </Icon>
          }
        >
          <Spin label="栏数" value="1" className="w-[52px]" />
          <Lock className="ml-2" />
          <span className="ml-[26px] flex">
            <Icon crisp>
              <Lines color="#bbb" rows={[[0, 7], [0, 7], [0, 7], [0, 7], [0, 7], [0, 7], [0, 7], [0, 5]]} />
              <Lines color="#bbb" rows={[[9, 16], [9, 16], [9, 16], [9, 16], [9, 16], [9, 16], [9, 16], [9, 14]]} />
            </Icon>
          </span>
          <Lock className="ml-[11px]" />
          <span className="mr-[11px] ml-auto flex"><Dots /></span>
          <Lock />
        </Row>
      </div>
      <hr className="mx-[2px] mt-[17px] border-[#d0d0d0]" />
      <div className="mt-[14px] flex h-6 items-center pl-px">
        <span className="w-[82px] text-[13px]">文本方向：</span>
        <button type="button" aria-label="水平方向" className="flex size-6 items-center justify-center border border-[#adadad] bg-white">
          <Icon><path d="M.5 8L3 1l2.500 7M1.500 6h3M8 2.500h8M8 6.500h8M0 11.500h16M0 15h16M13 1v3M13 5v3M13 10v3" /></Icon>
        </button>
        <button type="button" aria-label="垂直方向" className="ml-[5px] flex size-6 items-center justify-center">
          <Icon><path d="M.5 8L3 1l2.500 7M1.500 6h3M1.500 10v6M5.500 10v6M10.500 0v16M14.500 0v16M0 14h3M4 14h3M9 14h3M13 14h3" /></Icon>
        </button>
      </div>
    </section>
  );
}

function TextDocker() {
  return (
    <aside className="flex w-[313px] shrink-0 flex-col border-r border-[#d0d0d0]">
      <div className="flex h-[23px] shrink-0 items-center border-b border-[#adadad] bg-[#e9e9e9] pb-px pl-1.5">
        <h2 className="text-[13px]">文本</h2>
        <svg width="10" height="8" viewBox="0 0 10 8" className="ml-auto" fill="#b0b0b0" aria-hidden="true"><path d="M0 0l5 4-5 4zM5 0l5 4-5 4z" /></svg>
        <button type="button" aria-label="关闭" className="mr-[7px] ml-2.5">
          <svg width="8" height="8" stroke="#999" strokeWidth="1.5" aria-hidden="true"><path d="M0 0l8 8M8 0L0 8" /></svg>
        </button>
      </div>
      <div className="flex min-h-0 flex-1">
        <div className="flex min-w-0 flex-1 flex-col">
          <div className="flex h-[27px] shrink-0 items-center bg-[#e9e9e9] px-px pb-px">
            <button type="button" aria-label="字符" className="flex size-6 items-center justify-center border border-[#adadad] bg-white">
              <Icon><path d="M.8 15.500L7 .5h2l6.200 15M3.500 10h9" strokeWidth="1.800" /></Icon>
            </button>
            <button type="button" aria-label="段落" className="ml-[2px] flex size-6 items-center justify-center"><Icon crisp><Lines rows={full} /></Icon></button>
            <button type="button" aria-label="图文框" className="ml-[2px] flex size-6 items-center justify-center">
              <Icon crisp>
                <path d="M1.500 1.500h13v13h-13z" />
                <path d="M0 0h3v3H0zM13 0h3v3h-3zM0 13h3v3H0zM13 13h3v3h-3z" fill="#333" stroke="none" />
              </Icon>
            </button>
            <button type="button" aria-label="导入样式" className="ml-auto">
              <Icon>
                <path d="M.7 4v11.300h14.600V4" strokeWidth="1.300" />
                <path d="M1 3h14V1h-3M1 3V1h3M5 1.500h6" strokeWidth="2" />
                <path d="M8 6v6M5.500 10L8 12.500l2.500-2.500" strokeWidth="1.500" />
              </Icon>
            </button>
            <span className="mr-[3px] ml-[7px] h-[22px] w-px bg-[#d0d0d0]" />
            <button type="button" aria-label="预览" className="flex size-6 items-center justify-center border border-[#adadad] bg-white">
              <Icon>
                <path d="M7 1.500H.7v14h14.600V8" strokeWidth="1.300" />
                <path d="M8.500 2q3.500-3.500 7 0q-3.500 3.500-7 0z" />
                <circle cx="12" cy="2" r="1" fill="#333" />
              </Icon>
            </button>
          </div>
          <div className="flex min-h-0 flex-1">
            <div className="w-[275px] shrink-0 overflow-hidden border-r border-white">
              <CharacterSection />
              <MoreStrip />
              <ParagraphSection />
              <MoreStrip />
              <FrameSection />
            </div>
            <div className="flex min-w-0 flex-1 justify-center bg-[#efefef] pt-1"><Chevron dir="up" color="#c0c0c0" /></div>
          </div>
        </div>
        <div className="flex w-[21px] shrink-0 flex-col border-l border-[#adadad] bg-[#e9e9e9] text-[13px]">
          <button type="button" className="flex h-[74px] flex-col items-center bg-[#adadad] pt-1">
            <Icon>
              <path d="M1 7l3-7h0l3 7M2 5h4" />
              <circle cx="12" cy="12" r="2.800" strokeWidth="2" />
            </Icon>
            <span className="mt-[5px] leading-5 [writing-mode:vertical-rl] [text-orientation:sideways]">文本</span>
          </button>
          <button type="button" className="flex h-[101px] flex-col items-center bg-[#d6d6d6] pt-1">
            <Icon>
              <path d="M1 3l5-2.500 9 9-4.500 5.500L2 8zM1 3q6-3 9 1l4 4M3 6l8 7" strokeWidth="1.200" />
            </Icon>
            <span className="mt-[5px] leading-5 [writing-mode:vertical-rl] [text-orientation:sideways]">对象样式</span>
          </button>
          <button type="button" aria-label="添加泊坞窗" className="mt-[5px] flex justify-center"><Plus /></button>
        </div>
      </div>
    </aside>
  );
}

function ColorPalette() {
  return (
    <aside className="flex w-5 shrink-0 flex-col items-center">
      <Grip className="mt-[2px] h-[6px] w-4 shrink-0" />
      <svg width="4" height="8" className="mt-[5px] shrink-0" aria-hidden="true"><path d="M0 0v8l4-4z" fill="#777" /></svg>
      <span className="mt-2 flex shrink-0 scale-75"><Dropper gray /></span>
      <span className="mt-1 flex shrink-0"><Chevron dir="up" color="#c8c8c8" /></span>
      <ul className="mt-[5px] min-h-0 w-[18px] flex-1 overflow-hidden border-x border-t border-[#555]">
        <li>
          <button type="button" aria-label="无色" className="flex h-[17px] w-full items-center justify-center border-b border-[#555] bg-white">
            <RedSlash w={12} h={12} />
          </button>
        </li>
        {SWATCHES.map((c, i) => (
          <li key={i}>
            <button type="button" aria-label={c} className="block h-[17px] w-full border-b border-[#555]" style={{ backgroundColor: c }} />
          </li>
        ))}
      </ul>
      <span className="mt-[2px] flex shrink-0"><Chevron dir="down" color="#b8b8b8" /></span>
      <span className="mt-2 mb-[11px] flex shrink-0"><Chevron double color="#999" /></span>
    </aside>
  );
}

/* ---------- status bar ---------- */

function StatusBar() {
  return (
    <footer className="flex h-[34px] shrink-0 items-center border-t border-[#d0d0d0] pt-[2px] text-[13px] whitespace-nowrap">
      <button type="button" aria-label="状态栏设置" className="relative ml-[10px] flex w-[19px]">
        <Gear />
        <svg width="5" height="5" className="absolute right-0 bottom-[-3px]" aria-hidden="true"><path d="M5 0v5H0z" fill="#777" /></svg>
      </button>
      <p className="ml-[7px]">
        <Mixed latin="text-xs">单击对象两次可旋转/倾斜；双击工具可选择所有对象；按住 Shift 键单击可选择多个对象；按住 Alt 键单击可进行挖掘；按住 Ctrl 并单击可在组中选择</Mixed>
      </p>
      <p className="ml-[29px]"><Mixed latin="text-xs">表格 于 图层 1</Mixed></p>
      <div className="ml-auto flex w-[205px] items-center">
        <Bucket />
        <span className="ml-[2px] flex size-[22px] items-center justify-center border border-[#999] bg-white">
          <svg width="20" height="20" aria-hidden="true"><path d="M0 20L20 0" stroke="#e02020" strokeWidth="1.500" /></svg>
        </span>
        <span className="ml-1">无</span>
      </div>
      <svg width="10" height="16" viewBox="0 0 10 16" fill="none" stroke="#333" strokeWidth="1.2" aria-hidden="true">
        <path d="M5 0L1 8l2 3h4l2-3zM5 1v6M2.500 11.500h5V15h-5z" />
        <circle cx="5" cy="7.500" r="1" />
      </svg>
      <span className="ml-[2px] size-[22px] border border-[#888] bg-[#231815]" />
      <dl className="ml-[5px] flex w-[205px] text-xs">
        {[['C:', '0'], ['M:', '0'], ['Y:', '0'], ['K:', '100']].map(([k, v]) => (
          <div key={k} className="flex w-[34px]">
            <dt className="w-6 shrink-0">{k}</dt>
            <dd>{v}</dd>
          </div>
        ))}
      </dl>
      <span className="h-[26px] w-px bg-[#d0d0d0]" />
      <span className="mr-[11px] ml-2.5 flex">
        <Icon>
          <path d="M.7.7h14.600v11H.7z" fill="#fff" strokeWidth="1.400" />
          <path d="M2 2h12v3H2z" fill="#e02020" stroke="none" />
          <path d="M2 8h12v3H2z" fill="#00a0d8" stroke="none" />
          <circle cx="8" cy="6.500" r="2.500" fill="#d05030" />
          <path d="M6 13h4M3 15.500h10" />
        </Icon>
      </span>
    </footer>
  );
}

function Watermark() {
  return (
    <div className="pointer-events-none absolute right-[7px] bottom-[5px] z-10 flex items-center opacity-90">
      <svg width="46" height="42" viewBox="0 0 46 42" aria-hidden="true">
        <path d="M45 0C20-1 2 10 0 24c0 5 4 8 9 8C5 24 16 8 45 0z" fill="#6aa5dc" />
        <path d="M40 4C24 6 12 14 10 24c2 6 10 6 15 0-4 1-8 0-7-4C19 13 28 7 40 4z" fill="#4a90d0" />
        <path d="M24 16c8-4 17-1 17 7 0 9-14 16-38 18C18 37 30 30 32 23c1-4-3-7-8-7z" fill="#6fc08a" />
        <path d="M24 32C18 37 10 40 3 41c10-6 16-9 21-9z" fill="#d6d860" />
      </svg>
      <div className="-ml-1">
        <p className="text-[21px] leading-6 font-bold text-[#5b95cf]">极光下载站</p>
        <p className="text-[17px] leading-5 text-[#55b878]">www.xz7.com</p>
      </div>
    </div>
  );
}

function Cursor() {
  return (
    <svg width="12" height="19" viewBox="0 0 12 19" className="pointer-events-none absolute top-[59px] left-[695px] z-30" aria-hidden="true">
      <path d="M.5.500v15.500l3.600-3.400 2.400 5.700 2.400-1-2.400-5.500h5z" fill="#fff" stroke="#222" />
    </svg>
  );
}

function App() {
  return (
    <div className="relative flex h-screen flex-col overflow-hidden bg-[#f3f3f3] font-['Noto_Sans','Noto_Sans_CJK_SC',sans-serif] text-black">
      <TitleBar />
      <MenuBar />
      <StandardBar />
      <PropertyBar />
      <div className="flex min-h-0 flex-1">
        <Toolbox />
        <Document />
        <span className="w-[5px] shrink-0 border-r border-[#d0d0d0] bg-white" />
        <TextDocker />
        <ColorPalette />
      </div>
      <StatusBar />
      <div className="absolute right-[518px] bottom-5 z-10 flex h-[26px] w-[63px] items-center justify-center gap-1 rounded-md border border-[#999] bg-white text-[13px] shadow-md">
        <span className="text-xs">CH</span>
        <svg width="10" height="12" viewBox="0 0 10 12" fill="none" stroke="#222" aria-hidden="true"><path d="M4 .500c8 3 6 10-3.500 10.500C4 9 5 6 4 .500z" /></svg>
        <span>简</span>
      </div>
      <Watermark />
      <Cursor />
    </div>
  );
}

export default App;
